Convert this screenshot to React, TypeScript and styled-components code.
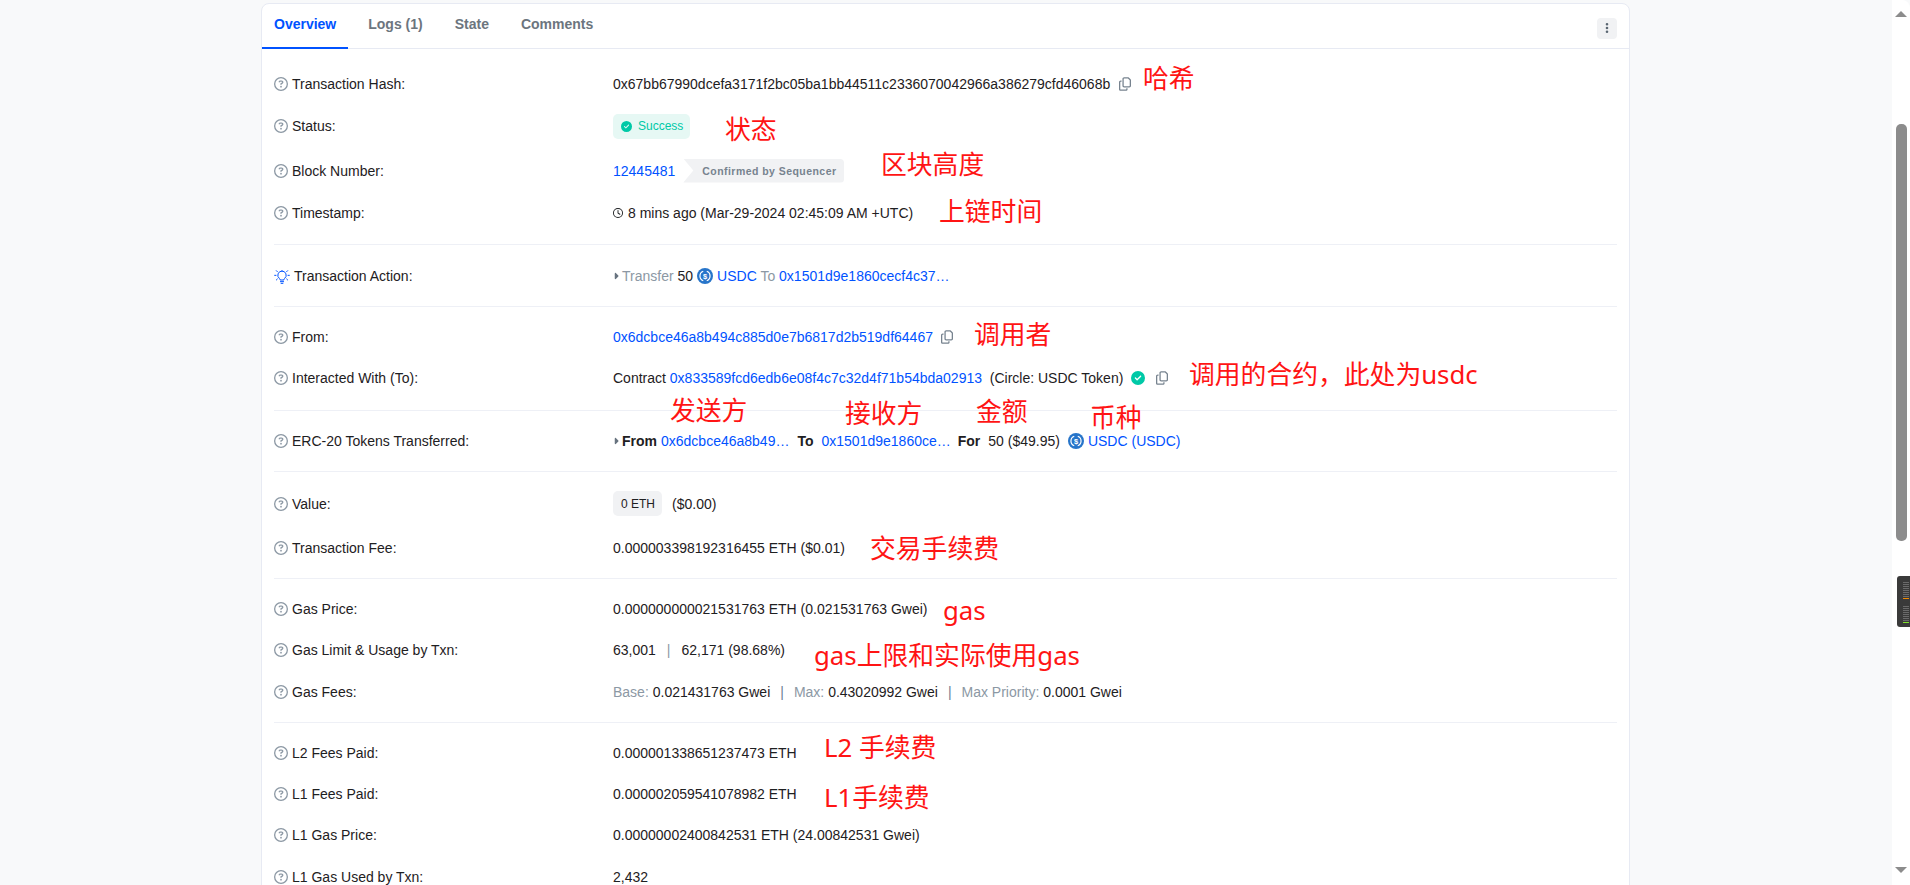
import React from "react";
import styled, { createGlobalStyle } from "styled-components";
import {
    FaCaretRight,
    FaCircleCheck,
    FaEllipsisVertical,
    FaRegCircleQuestion,
    FaRegClock,
    FaRegCopy,
} from "react-icons/fa6";

const GlobalStyle = createGlobalStyle`
    html, body {
        margin: 0;
        height: 100%;
        overflow: hidden;
        background: #f8f9fa;
    }
    body {
        font-family: "Liberation Sans", Arial, sans-serif;
        font-size: 14px;
        color: #1e2022;
    }
`;

const Page = styled.div`
    position: relative;
    display: flex;
    height: 885px;
    overflow: hidden;
`;

const Main = styled.main`
    flex: 1;
    min-width: 0;
    padding: 3px 0 0 261px;
`;

const Card = styled.section`
    width: 1369px;
    box-sizing: border-box;
    background: #fff;
    border: 1px solid #e7eaf3;
    border-radius: 8px;
`;

const TabBar = styled.div`
    display: flex;
    align-items: stretch;
    justify-content: space-between;
    height: 44px;
    border-bottom: 1px solid #e7eaf3;
    padding-right: 12px;
`;

const Tabs = styled.nav`
    display: flex;
    gap: 8px;
`;

const Tab = styled.a<{ $active?: boolean }>`
    display: flex;
    align-items: center;
    padding: 0 12px 3px;
    margin-bottom: -1px;
    font-weight: 700;
    font-size: 14px;
    color: ${(p) => (p.$active ? "#0052ff" : "#6c757e")};
    border-bottom: 2px solid ${(p) => (p.$active ? "#0052ff" : "transparent")};
`;

const MoreButton = styled.button`
    align-self: center;
    width: 20px;
    height: 21px;
    margin-top: 4px;
    padding: 0;
    border: 0;
    border-radius: 4px;
    background: #f1f2f4;
    color: #5a6672;
    display: flex;
    align-items: center;
    justify-content: center;
    font-size: 12px;
`;

const Body = styled.div`
    padding: 0 12px;
`;

const Section = styled.div<{ $top?: number; $bottom?: number; $last?: boolean }>`
    padding: ${(p) => p.$top ?? 10}px 0 ${(p) => p.$bottom ?? 10}px;
    border-bottom: ${(p) => (p.$last ? "0" : "1px solid #eef0f6")};
`;

const Row = styled.div<{ $h?: number }>`
    display: grid;
    grid-template-columns: 339px 1fr;
    align-items: center;
    height: ${(p) => p.$h ?? 41}px;
`;

const Label = styled.div`
    display: flex;
    align-items: center;
    gap: 4px;
    color: #1e2022;
`;

const HelpIcon = styled(FaRegCircleQuestion)`
    width: 14px;
    height: 14px;
    color: #8c98a4;
    flex: none;
`;

const BulbIcon = styled.svg`
    width: 16px;
    height: 16px;
    flex: none;
    color: #0052ff;
`;

const Value = styled.div`
    display: flex;
    align-items: center;
    white-space: pre;
    color: #1e2022;
`;

const Link = styled.a`
    color: #0052ff;
`;

const Muted = styled.span`
    color: #8c98a4;
`;

const Keyword = styled.b<{ $before: number; $after: number }>`
    margin: 0 ${(p) => p.$after}px 0 ${(p) => p.$before}px;
    font-weight: 700;
`;

const CopyIcon = styled(FaRegCopy)<{ $gap?: number }>`
    width: 12px;
    height: 14px;
    margin-left: ${(p) => p.$gap ?? 8}px;
    color: #77838f;
`;

const StatusBadge = styled.span`
    display: inline-flex;
    align-items: center;
    gap: 6px;
    height: 25px;
    padding: 0 7px 0 8px;
    border-radius: 5px;
    background: #e6f8f4;
    color: #00c9a7;
    font-size: 12px;
`;

const TealCheck = styled(FaCircleCheck)<{ $size: number; $gap?: number }>`
    width: ${(p) => p.$size}px;
    height: ${(p) => p.$size}px;
    margin-left: ${(p) => p.$gap ?? 0}px;
    color: #00c9a7;
`;

const SequencerTag = styled.span`
    display: inline-flex;
    align-items: center;
    height: 24px;
    margin-left: 8px;
    padding: 0 8px 0 19px;
    background: #f1f2f4;
    border-radius: 0 4px 4px 0;
    clip-path: polygon(0 0, 100% 0, 100% 100%, 0 100%, 10px 50%);
    color: #77838f;
    font-size: 10.5px;
    font-weight: 700;
    letter-spacing: 0.45px;
`;

const ClockIcon = styled(FaRegClock)`
    width: 10px;
    height: 10px;
    margin-right: 5px;
`;

const Caret = styled(FaCaretRight)`
    width: 6px;
    height: 10px;
    margin-right: 3px;
    color: #67737f;
`;

const TokenMark = styled.svg<{ $before: number }>`
    width: 16px;
    height: 16px;
    margin: 0 4px 0 ${(p) => p.$before}px;
    flex: none;
`;

const ValuePill = styled.span`
    display: inline-flex;
    align-items: center;
    height: 25px;
    padding: 0 7px 0 8px;
    margin-right: 10px;
    border-radius: 5px;
    background: #f1f2f4;
    font-size: 12px;
`;

const Pipe = styled.span<{ $tint?: boolean; $gap: number }>`
    margin: 0 ${(p) => p.$gap}px;
    color: ${(p) => (p.$tint ? "#6c7f95" : "#8c98a4")};
`;

const Note = styled.span<{ $x: number; $y: number }>`
    position: absolute;
    left: ${(p) => p.$x}px;
    top: ${(p) => p.$y}px;
    transform: translateY(-50%);
    font-family: "Noto Sans", "Noto Sans CJK SC", sans-serif;
    font-size: 25.8px;
    line-height: 1;
    white-space: nowrap;
    color: #ff1414;
`;

const ScrollRail = styled.aside`
    width: 18px;
    flex: none;
    background: #fff;
    border-radius: 0 8px 0 0;
    display: flex;
    flex-direction: column;
    align-items: center;
`;

const Arrow = styled.span<{ $down?: boolean }>`
    flex: none;
    width: 0;
    height: 0;
    border-left: 6px solid transparent;
    border-right: 6px solid transparent;
    border-bottom: ${(p) => (p.$down ? "0" : "6px solid #8c8c8c")};
    border-top: ${(p) => (p.$down ? "6px solid #8c8c8c" : "0")};
`;

const TopArrow = styled(Arrow)`
    margin-top: 11px;
`;

const BottomArrow = styled(Arrow)`
    margin-top: auto;
    margin-bottom: 12px;
`;

const Thumb = styled.div`
    width: 11px;
    height: 417px;
    margin-top: 107px;
    border-radius: 5px;
    background: #8c8c8c;
`;

const MeterWidget = styled.div`
    position: absolute;
    right: 0;
    top: 576px;
    width: 13px;
    height: 51px;
    box-sizing: border-box;
    padding: 6px 1px 0 6px;
    display: flex;
    flex-direction: column;
    gap: 7px;
    background: #3a3a3a;
    border-radius: 3px 0 0 3px;
`;

const Meter = styled.div<{ $color: string }>`
    height: 16px;
    border-bottom: 1px solid ${(p) => p.$color};
    background: repeating-linear-gradient(
        to bottom,
        #6a6a6a 0,
        #6a6a6a 1px,
        transparent 1px,
        transparent 2px
    );
`;

const UsdcIcon = ({ before }: { before: number }) => (
    <TokenMark $before={before} viewBox="0 0 32 32">
        <circle cx="16" cy="16" r="16" fill="#2775ca" />
        <path
            d="M12.5 6.6a10 10 0 0 0 0 18.8M19.5 6.6a10 10 0 0 1 0 18.8"
            fill="none"
            stroke="#fff"
            strokeWidth="2.4"
        />
        <text
            x="16"
            y="21.5"
            textAnchor="middle"
            fontSize="15"
            fontWeight="700"
            fill="#fff"
            fontFamily="Liberation Sans"
        >
            $
        </text>
    </TokenMark>
);

const Bulb = () => (
    <BulbIcon viewBox="0 0 24 24" fill="none" stroke="currentColor" strokeWidth="1.5" strokeLinecap="round">
        <path d="M12 4.5a6.3 6.3 0 0 0-3.8 11.3c.7.6 1 1.3 1 2.2h5.6c0-.9.3-1.6 1-2.2A6.3 6.3 0 0 0 12 4.5Z" />
        <path d="M9.6 20.5h4.8M10.6 23h2.8" />
        <path d="M1 11h2M21 11h2M3.5 4l1.5 1.5M20.5 4 19 5.5M3.5 18l1.5-1.5M20.5 18 19 16.5" />
    </BulbIcon>
);

const Field = ({ label, h, children }: { label: string; h?: number; children: React.ReactNode }) => (
    <Row $h={h}>
        <Label>
            <HelpIcon />
            {label}
        </Label>
        <Value>{children}</Value>
    </Row>
);

const notes: [string, number, number][] = [
    ["哈希", 1143, 79],
    ["状态", 725, 130],
    ["区块高度", 881, 165],
    ["上链时间", 939, 212],
    ["调用者", 974, 335],
    ["调用的合约，此处为usdc", 1189, 375],
    ["发送方", 670, 411],
    ["接收方", 845, 414],
    ["金额", 976, 412],
    ["币种", 1090, 418],
    ["交易手续费", 870, 549],
    ["gas", 943, 611],
    ["gas上限和实际使用gas", 814, 656],
    ["L2 手续费", 824, 748],
    ["L1手续费", 824, 798],
];

const App = () => {
    return (
        <Page>
            <GlobalStyle />
            <Main>
                <Card>
                    <TabBar>
                        <Tabs>
                            <Tab $active>Overview</Tab>
                            <Tab>Logs (1)</Tab>
                            <Tab>State</Tab>
                            <Tab>Comments</Tab>
                        </Tabs>
                        <MoreButton>
                            <FaEllipsisVertical />
                        </MoreButton>
                    </TabBar>
                    <Body>
                        <Section $top={14} $bottom={11}>
                            <Field label="Transaction Hash:">
                                0x67bb67990dcefa3171f2bc05ba1bb44511c2336070042966a386279cfd46068b
                                <CopyIcon $gap={9} />
                            </Field>
                            <Field label="Status:" h={44}>
                                <StatusBadge>
                                    <TealCheck $size={11} />
                                    Success
                                </StatusBadge>
                            </Field>
                            <Field label="Block Number:" h={45}>
                                <Link>12445481</Link>
                                <SequencerTag>Confirmed by Sequencer</SequencerTag>
                            </Field>
                            <Field label="Timestamp:" h={40}>
                                <ClockIcon />8 mins ago (Mar-29-2024 02:45:09 AM +UTC)
                            </Field>
                        </Section>
                        <Section>
                            <Row>
                                <Label>
                                    <Bulb />
                                    Transaction Action:
                                </Label>
                                <Value>
                                    <Caret />
                                    <Muted>Transfer </Muted>50
                                    <UsdcIcon before={4} />
                                    <Link>USDC</Link>
                                    <Muted> To </Muted>
                                    <Link>0x1501d9e1860cecf4c37…</Link>
                                </Value>
                            </Row>
                        </Section>
                        <Section $top={9} $bottom={12}>
                            <Field label="From:">
                                <Link>0x6dcbce46a8b494c885d0e7b6817d2b519df64467</Link>
                                <CopyIcon />
                            </Field>
                            <Field label="Interacted With (To):">
                                {"Contract "}
                                <Link>0x833589fcd6edb6e08f4c7c32d4f71b54bda02913</Link>
                                {"  (Circle: USDC Token)"}
                                <TealCheck $size={14} $gap={8} />
                                <CopyIcon $gap={11} />
                            </Field>
                        </Section>
                        <Section $top={9}>
                            <Field label="ERC-20 Tokens Transferred:">
                                <Caret />
                                <Keyword $before={0} $after={4}>From</Keyword>
                                <Link>0x6dcbce46a8b49…</Link>
                                <Keyword $before={8} $after={8}>To</Keyword>
                                <Link>0x1501d9e1860ce…</Link>
                                <Keyword $before={7} $after={8}>For</Keyword>
                                50 ($49.95)
                                <UsdcIcon before={8} />
                                <Link>USDC (USDC)</Link>
                            </Field>
                        </Section>
                        <Section $top={8}>
                            <Field label="Value:" h={47}>
                                <ValuePill>0 ETH</ValuePill>($0.00)
                            </Field>
                            <Field label="Transaction Fee:">
                                0.000003398192316455 ETH ($0.01)
                            </Field>
                        </Section>
                        <Section $top={9}>
                            <Field label="Gas Price:">
                                0.000000000021531763 ETH (0.021531763 Gwei)
                            </Field>
                            <Field label="Gas Limit & Usage by Txn:" h={42}>
                                63,001
                                <Pipe $gap={11}>|</Pipe>
                                62,171 (98.68%)
                            </Field>
                            <Field label="Gas Fees:">
                                <Muted>Base: </Muted>0.021431763 Gwei
                                <Pipe $tint $gap={10}>|</Pipe>
                                <Muted>Max: </Muted>0.43020992 Gwei
                                <Pipe $tint $gap={10}>|</Pipe>
                                <Muted>Max Priority: </Muted>0.0001 Gwei
                            </Field>
                        </Section>
                        <Section $last>
                            <Field label="L2 Fees Paid:" h={40}>0.000001338651237473 ETH</Field>
                            <Field label="L1 Fees Paid:">0.000002059541078982 ETH</Field>
                            <Field label="L1 Gas Price:" h={42}>
                                0.00000002400842531 ETH (24.00842531 Gwei)
                            </Field>
                            <Field label="L1 Gas Used by Txn:">2,432</Field>
                        </Section>
                    </Body>
                </Card>
            </Main>
            <ScrollRail>
                <TopArrow />
                <Thumb />
                <BottomArrow $down />
            </ScrollRail>
            <MeterWidget>
                <Meter $color="#f08a00" />
                <Meter $color="#7de02a" />
            </MeterWidget>
            {notes.map(([text, x, y]) => (
                <Note key={text} $x={x} $y={y}>
                    {text}
                </Note>
            ))}
        </Page>
    );
};

export default App;
